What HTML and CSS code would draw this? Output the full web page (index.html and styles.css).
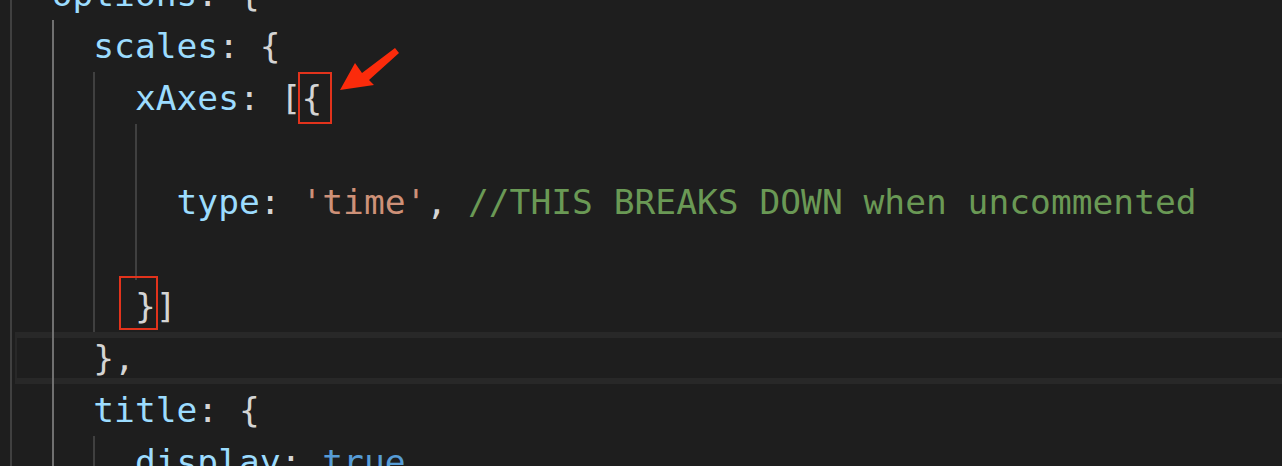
FILE: index.html
```html
<!DOCTYPE html>
<html>
<head>
<meta charset="utf-8">
<link rel="stylesheet" href="styles.css">
</head>
<body>
<div class="screen">
  <div class="editor">
    <div class="line"><span class="g"></span><span class="p">options</span><span class="t">: {</span></div>
    <div class="line"><span class="g"></span><span class="g a"></span><span class="p">scales</span><span class="t">: {</span></div>
    <div class="line"><span class="g"></span><span class="g a"></span><span class="g"></span><span class="p">xAxes</span><span class="t">: [{</span></div>
    <div class="line"><span class="g"></span><span class="g a"></span><span class="g"></span><span class="g"></span></div>
    <div class="line"><span class="g"></span><span class="g a"></span><span class="g"></span><span class="g"></span><span class="p">type</span><span class="t">: </span><span class="s">'time'</span><span class="t">, </span><span class="c">//THIS BREAKS DOWN when uncommented</span></div>
    <div class="line"><span class="g"></span><span class="g a"></span><span class="g"></span><span class="g"></span></div>
    <div class="line"><span class="g"></span><span class="g a"></span><span class="g"></span><span class="t">}]</span></div>
    <div class="line current"><span class="g"></span><span class="g a"></span><span class="t">},</span></div>
    <div class="line"><span class="g"></span><span class="g a"></span><span class="p">title</span><span class="t">: {</span></div>
    <div class="line"><span class="g"></span><span class="g a"></span><span class="g"></span><span class="p">display</span><span class="t">: </span><span class="k">true</span><span class="t">,</span></div>
  </div>
  <div class="mark mark-open"></div>
  <div class="mark mark-close"></div>
  <svg class="arrow" width="80" height="60" viewBox="330 40 80 60">
    <polygon points="340,90 355,63 362,73 395,48 399,53 369,80 374,85" fill="#fb2b0b"/>
  </svg>
</div>
</body>
</html>
```

FILE: styles.css
```css
html, body {
  margin: 0;
  padding: 0;
  background: #1e1e1e;
}

.screen {
  position: relative;
  width: 1282px;
  height: 466px;
  overflow: hidden;
  background: #1e1e1e;
}

.editor {
  margin-top: -32px;
  font-family: "DejaVu Sans Mono", "Liberation Mono", monospace;
  font-size: 34.6px;
  color: #d4d4d4;
}

.line {
  position: relative;
  height: 52px;
  line-height: 52px;
  padding-left: 10px;
  white-space: pre;
}

.line.current::before {
  content: "";
  position: absolute;
  left: 15px;
  right: 0;
  top: 0;
  bottom: 0;
  border: 6px solid #282828;
  border-left-width: 2px;
  border-right: none;
}

.g {
  position: relative;
  display: inline-block;
  box-sizing: border-box;
  width: 2ch;
  height: 52px;
  vertical-align: top;
  border-left: 2px solid #404040;
}

.g.a {
  border-left-color: #707070;
}

.p { color: #9cdcfe; }
.t { color: #d4d4d4; }
.s { color: #ce9178; }
.c { color: #6a9955; }
.k { color: #569cd6; }

.mark {
  position: absolute;
  box-sizing: border-box;
  border: 2px solid #e2331c;
}

.mark-open {
  left: 298px;
  top: 72px;
  width: 34px;
  height: 52px;
}

.mark-close {
  left: 119px;
  top: 276px;
  width: 39px;
  height: 54px;
}

.arrow {
  position: absolute;
  left: 330px;
  top: 40px;
}
```
